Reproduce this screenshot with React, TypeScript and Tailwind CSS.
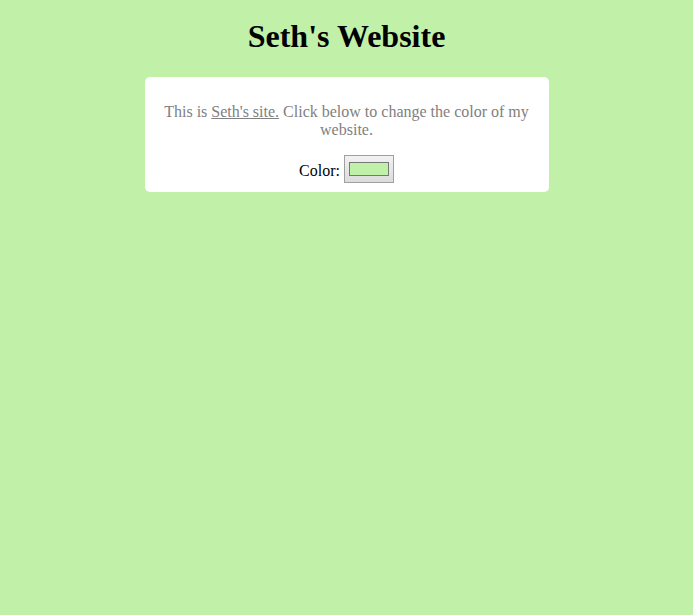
export default function App() {
  return (
    <div className="min-h-screen bg-[#c1f0a9] pt-[18px] text-black" style={{ minHeight: 615 }}>
      <h1 className="text-center font-['Liberation_Serif',serif] text-[32px] font-bold leading-[37px]">
        Seth's Website
      </h1>
      <div className="mx-auto mt-[22px] w-[404px] rounded-[5px] bg-white px-[10px] pt-[10px] pb-[9px] text-center font-['Liberation_Serif',serif] text-[16px] leading-[18px]">
        <p className="mt-[16px] text-[#808080]">
          This is <a className="underline">Seth's site.</a> Click below to change the color of my website.
        </p>
        <div className="mt-[16px] flex items-center justify-center gap-[4px]">
          <span className="pt-[4px]">Color:</span>
          <input
            type="color"
            defaultValue="#c1f0a9"
            className="h-[28px] w-[50px] border border-[#a0a0a0] bg-gradient-to-b from-[#f2f2f2] to-[#dcdcdc] p-[2px]"
          />
        </div>
      </div>
    </div>
  )
}
